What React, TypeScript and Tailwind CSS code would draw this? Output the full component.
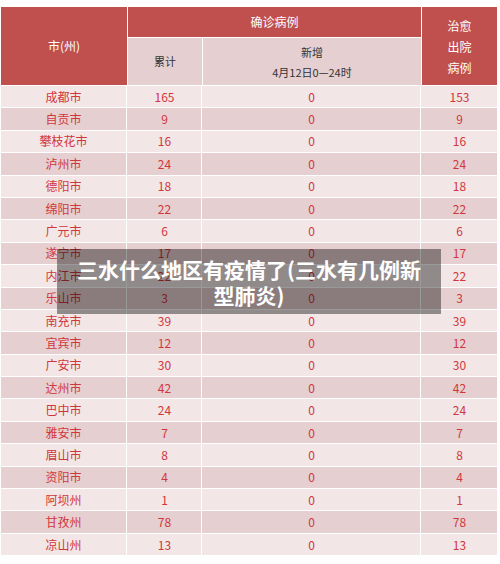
import React from 'react';

// 四川各市(州)确诊病例表 + 标题遮罩
const rows: [string, number, number, number][] = [
  ['成都市', 165, 0, 153],
  ['自贡市', 9, 0, 9],
  ['攀枝花市', 16, 0, 16],
  ['泸州市', 24, 0, 24],
  ['德阳市', 18, 0, 18],
  ['绵阳市', 22, 0, 22],
  ['广元市', 6, 0, 6],
  ['遂宁市', 17, 0, 17],
  ['内江市', 22, 0, 22],
  ['乐山市', 3, 0, 3],
  ['南充市', 39, 0, 39],
  ['宜宾市', 12, 0, 12],
  ['广安市', 30, 0, 30],
  ['达州市', 42, 0, 42],
  ['巴中市', 24, 0, 24],
  ['雅安市', 7, 0, 7],
  ['眉山市', 8, 0, 8],
  ['资阳市', 4, 0, 4],
  ['阿坝州', 1, 0, 1],
  ['甘孜州', 78, 0, 78],
  ['凉山州', 13, 0, 13],
];

const font = { fontFamily: '"Noto Sans CJK SC", "Noto Sans", sans-serif' };

export default function App() {
  return (
    <div className="relative w-[500px] h-[564px] bg-white pt-[7px] pl-[1px] overflow-hidden" style={font}>
      {/* 表头 */}
      <div className="grid grid-cols-[126px_74px_218px_75px] grid-rows-[30px_47px] gap-px bg-white w-[496px]">
        <div className="row-span-2 bg-[#c0504d] text-white text-[12px] flex items-center justify-center">
          市(州)
        </div>
        <div className="col-span-2 bg-[#c0504d] text-white text-[12px] flex items-center justify-center">
          确诊病例
        </div>
        <div className="row-span-2 bg-[#c0504d] text-white text-[12px] leading-[21px] flex flex-col items-center justify-center">
          <span>治愈</span>
          <span>出院</span>
          <span>病例</span>
        </div>
        <div className="bg-[#e6cfd0] text-[#333] text-[11px] flex items-center justify-center">累计</div>
        <div className="bg-[#e6cfd0] text-[#333] text-[11px] leading-[20px] flex flex-col items-center justify-center">
          <span>新增</span>
          <span>4月12日0—24时</span>
        </div>
      </div>

      {/* 数据行 */}
      <div className="flex flex-col gap-px pt-px w-[496px]">
        {rows.map(([city, total, added, cured], i) => (
          <div
            key={city}
            className={`grid grid-cols-[126px_74px_218px_75px] gap-px h-[21.4px] text-[12px] text-[#d0373c] ${
              i % 2 === 0 ? 'bg-[#f2e6e6]' : 'bg-[#e6cfd0]'
            }`}
          >
            <div className="flex items-center justify-center border-r border-white">{city}</div>
            <div className="flex items-center justify-center border-r border-white">{total}</div>
            <div className="flex items-center justify-center border-r border-white">{added}</div>
            <div className="flex items-center justify-center">{cured}</div>
          </div>
        ))}
      </div>

      {/* 标题遮罩 */}
      <div className="absolute left-[57px] top-[249px] w-[384px] h-[65px] bg-black/40 flex items-center justify-center">
        <p className="text-white font-bold text-[21px] leading-[26px] text-center">
          三水什么地区有疫情了(三水有几例新
          <br />
          型肺炎)
        </p>
      </div>
    </div>
  );
}
